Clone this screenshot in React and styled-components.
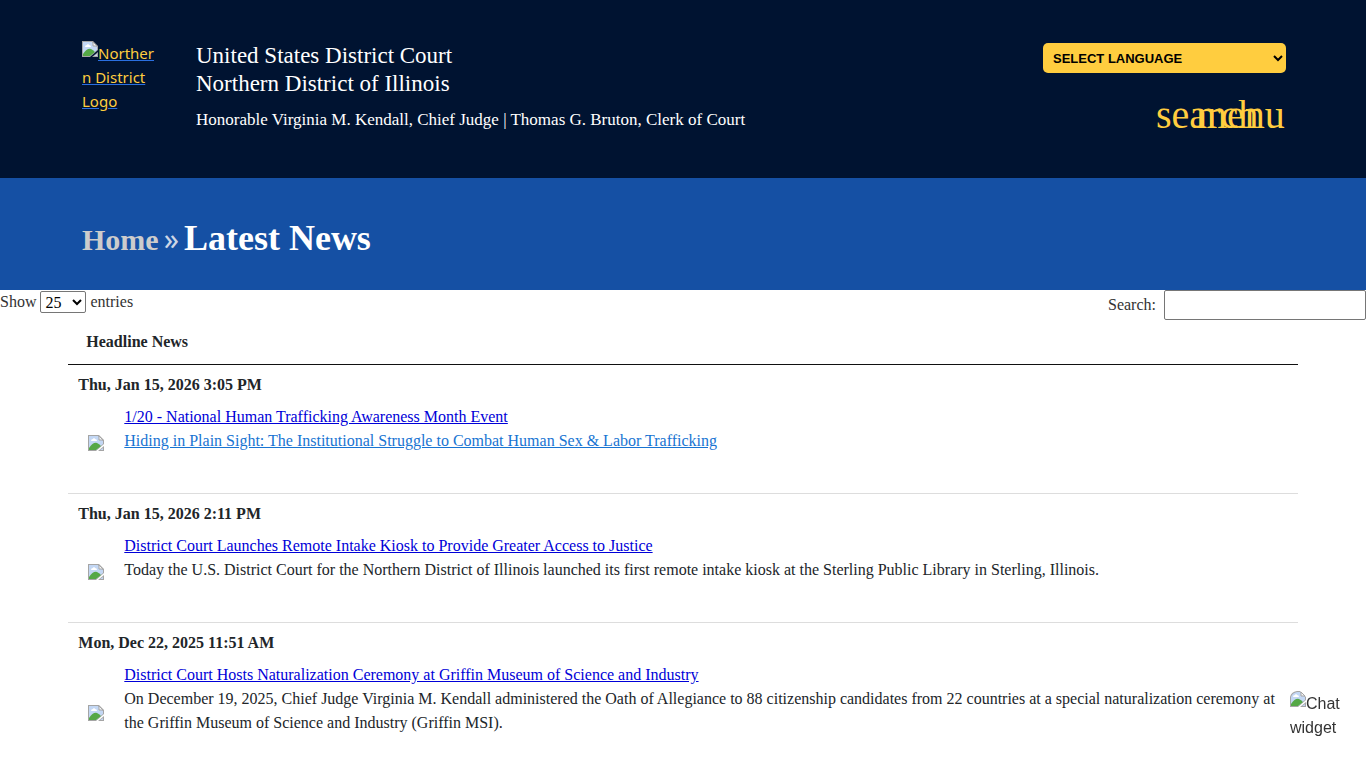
import React, { useState } from 'react';
import styled, { createGlobalStyle } from 'styled-components';

const GlobalStyle = createGlobalStyle`
  *, *::before, *::after {
    box-sizing: border-box;
  }

  html {
    overflow: hidden;
  }

  body {
    margin: 0;
    background: white;
    color: #212529;
    font-family: 'Liberation Serif', 'Times New Roman', serif;
    font-size: 16px;
    line-height: 24px;
  }
`;

const Header = styled.header`
  display: flex;
  justify-content: space-between;
  align-items: flex-start;
  min-height: 178px;
  padding: 41px 80px 41px 82px;
  background: #001331;
`;

const Brand = styled.div`
  display: flex;
  gap: 42px;
`;

const LogoLink = styled.a`
  width: 72px;
  color: #ffcd3f;
  font-family: 'Noto Sans', 'Open Sans', sans-serif;
  font-size: 15px;
  word-break: break-all;
  text-decoration: underline #2a6fe0;
`;

const CourtInfo = styled.div`
  padding-top: 1px;
`;

const CourtName = styled.p`
  margin: 0;
  color: white;
  font-size: 23px;
  line-height: 28px;
`;

const Officers = styled.p`
  margin: 10px 0 0;
  color: white;
  font-size: 17px;
`;

const Tools = styled.div`
  display: flex;
  flex-direction: column;
  align-items: flex-end;
  gap: 20px;
  padding-top: 2px;
`;

const LanguageSelect = styled.select`
  width: 243px;
  height: 30px;
  padding: 0 0 0 6px;
  border: 0;
  border-radius: 5px;
  background: #ffcd3f;
  color: #000;
  font-family: 'Liberation Sans', Arial, sans-serif;
  font-size: 13px;
  font-weight: 700;
  text-transform: uppercase;
`;

const IconBar = styled.nav`
  display: flex;
  width: 130px;
`;

const IconButton = styled.button`
  width: 40px;
  height: 40px;
  padding: 0;
  border: 0;
  background: none;
  color: #ffcd3f;
  font-family: inherit;
  font-size: 40px;
  line-height: 44px;
  text-align: left;
  white-space: nowrap;
  cursor: pointer;
`;

const TitleBar = styled.div`
  display: flex;
  align-items: baseline;
  gap: 5px;
  min-height: 112px;
  padding: 36px 82px 24px;
  background: #1550a4;
  line-height: 48px;
`;

const HomeLink = styled.a`
  color: #ccc;
  font-size: 30px;
  font-weight: 700;
  text-decoration: none;
`;

const Separator = styled.span`
  color: #ccd6e6;
  font-family: 'Noto Sans', 'Open Sans', sans-serif;
  font-size: 30px;
`;

const PageTitle = styled.h1`
  margin: 0;
  color: white;
  font-size: 36px;
  font-weight: 700;
`;

const TableControls = styled.div`
  display: flex;
  justify-content: space-between;
  align-items: flex-start;
  color: #333;
`;

const LengthLabel = styled.label`
  display: flex;
  align-items: center;
  gap: 4px;
`;

const LengthSelect = styled.select`
  width: 46px;
  height: 22px;
  padding: 0;
  border: 1px solid #767676;
  border-radius: 2px;
  background: white;
  color: #000;
  font-family: inherit;
  font-size: 16px;
`;

const SearchLabel = styled.label`
  display: flex;
  align-items: center;
  gap: 8px;
`;

const SearchInput = styled.input`
  width: 202px;
  height: 30px;
  padding: 1px 2px;
  border: 1px solid #767676;
  border-radius: 2px;
  font-family: inherit;
  font-size: 16px;
`;

const NewsTable = styled.table`
  width: 90%;
  margin: 0 auto;
  border-collapse: separate;
  border-spacing: 0;
`;

const HeadCell = styled.th`
  padding: 10px 18px;
  border-bottom: 1px solid #111;
  text-align: left;
  font-weight: 700;
`;

const NewsCell = styled.td`
  padding: 8px 10px 40px;
  border-bottom: 1px solid #ddd;
`;

const NewsDate = styled.div`
  font-weight: 700;
`;

const NewsItem = styled.div`
  display: flex;
  align-items: center;
  gap: 20px;
  margin-top: 8px;
  padding-left: 10px;
`;

const NewsIcon = styled.span`
  display: flex;
  flex: none;
  padding-top: 28px;
`;

const NewsLink = styled.a`
  color: ${({ $related }) => ($related ? '#1874d2' : '#0000d8')};
`;

const ChatWidget = styled.button`
  position: fixed;
  right: 16px;
  bottom: 23px;
  width: 60px;
  height: 60px;
  padding: 0;
  border: 0;
  background: none;
  color: #333;
  font-family: 'Liberation Sans', Arial, sans-serif;
  font-size: 16px;
  line-height: 24px;
  text-align: left;
  cursor: pointer;
`;

const IconSvg = styled.svg`
  display: inline-block;
  flex: none;
  width: 16px;
  height: 16px;
  vertical-align: ${({ $inline }) => ($inline ? '2px' : 'top')};
`;

const MissingImage = ({ inline, rounded }) => (
  <IconSvg $inline={inline} viewBox="0 0 16 16" aria-hidden="true">
    <path
      d={rounded ? 'M0 16V6Q1 1 7 0H10L16 6V9L8 16Z' : 'M0 0H11L16 5V9L8 16H0Z'}
      fill="#a5a5a5"
    />
    <path d={rounded ? 'M1 15V6Q2 2 7 1H10L15 6V9L8 15Z' : 'M1 1H10L15 6V9L8 15H1Z'} fill="#c3d7f4" />
    <path d="M3 6Q3 4 5 4Q6 2 7 4Q9 4 9 6Z" fill="#fff" />
    <path d="M1 15V13Q5 7 9 8Q11 9 13 11L8 15Z" fill="#55a846" />
    <path d="M16 11V16H10Z" fill="#a5a5a5" />
    <path d="M15 13V15H12Z" fill="#c3d7f4" />
    <path d="M11 1V5H15Z" fill="#f5f5f5" stroke="#a5a5a5" strokeWidth="1" />
  </IconSvg>
);

const news = [
  {
    date: 'Thu, Jan 15, 2026 3:05 PM',
    title: '1/20 - National Human Trafficking Awareness Month Event',
    related: 'Hiding in Plain Sight: The Institutional Struggle to Combat Human Sex & Labor Trafficking',
  },
  {
    date: 'Thu, Jan 15, 2026 2:11 PM',
    title: 'District Court Launches Remote Intake Kiosk to Provide Greater Access to Justice',
    text: 'Today the U.S. District Court for the Northern District of Illinois launched its first remote intake kiosk at the Sterling Public Library in Sterling, Illinois.',
  },
  {
    date: 'Mon, Dec 22, 2025 11:51 AM',
    title: 'District Court Hosts Naturalization Ceremony at Griffin Museum of Science and Industry',
    text: 'On December 19, 2025, Chief Judge Virginia M. Kendall administered the Oath of Allegiance to 88 citizenship candidates from 22 countries at a special naturalization ceremony at the Griffin Museum of Science and Industry (Griffin MSI).',
  },
];

const App = () => {
  const [pageLength, setPageLength] = useState('25');
  const [search, setSearch] = useState('');

  const visibleNews = news
    .filter(({ title }) => title.toLowerCase().includes(search.toLowerCase()))
    .slice(0, Number(pageLength));

  return (
    <>
      <GlobalStyle />
      <Header>
        <Brand>
          <LogoLink href="#home">
            <MissingImage inline />Northern District Logo
          </LogoLink>
          <CourtInfo>
            <CourtName>United States District Court</CourtName>
            <CourtName>Northern District of Illinois</CourtName>
            <Officers>
              Honorable Virginia M. Kendall, Chief Judge | Thomas G. Bruton, Clerk of Court
            </Officers>
          </CourtInfo>
        </Brand>
        <Tools>
          <LanguageSelect aria-label="Language">
            <option>Select Language</option>
            <option>Spanish</option>
          </LanguageSelect>
          <IconBar>
            <IconButton type="button">search</IconButton>
            <IconButton type="button">menu</IconButton>
          </IconBar>
        </Tools>
      </Header>

      <TitleBar>
        <HomeLink href="#home">Home</HomeLink>
        <Separator>»</Separator>
        <PageTitle>Latest News</PageTitle>
      </TitleBar>

      <TableControls>
        <LengthLabel>
          Show
          <LengthSelect value={pageLength} onChange={(e) => setPageLength(e.target.value)}>
            <option>10</option>
            <option>25</option>
            <option>50</option>
          </LengthSelect>
          entries
        </LengthLabel>
        <SearchLabel>
          Search:
          <SearchInput type="search" value={search} onChange={(e) => setSearch(e.target.value)} />
        </SearchLabel>
      </TableControls>

      <NewsTable>
        <thead>
          <tr>
            <HeadCell>Headline News</HeadCell>
          </tr>
        </thead>
        <tbody>
          {visibleNews.map(({ date, title, related, text }) => (
            <tr key={title}>
              <NewsCell>
                <NewsDate>{date}</NewsDate>
                <NewsItem>
                  <NewsIcon>
                    <MissingImage />
                  </NewsIcon>
                  <div>
                    <NewsLink href="#article">{title}</NewsLink>
                    <br />
                    {related && <NewsLink href="#related" $related>{related}</NewsLink>}
                    {text}
                  </div>
                </NewsItem>
              </NewsCell>
            </tr>
          ))}
        </tbody>
      </NewsTable>

      <ChatWidget type="button">
        <MissingImage inline rounded />Chat widget
      </ChatWidget>
    </>
  );
};

export default App;
